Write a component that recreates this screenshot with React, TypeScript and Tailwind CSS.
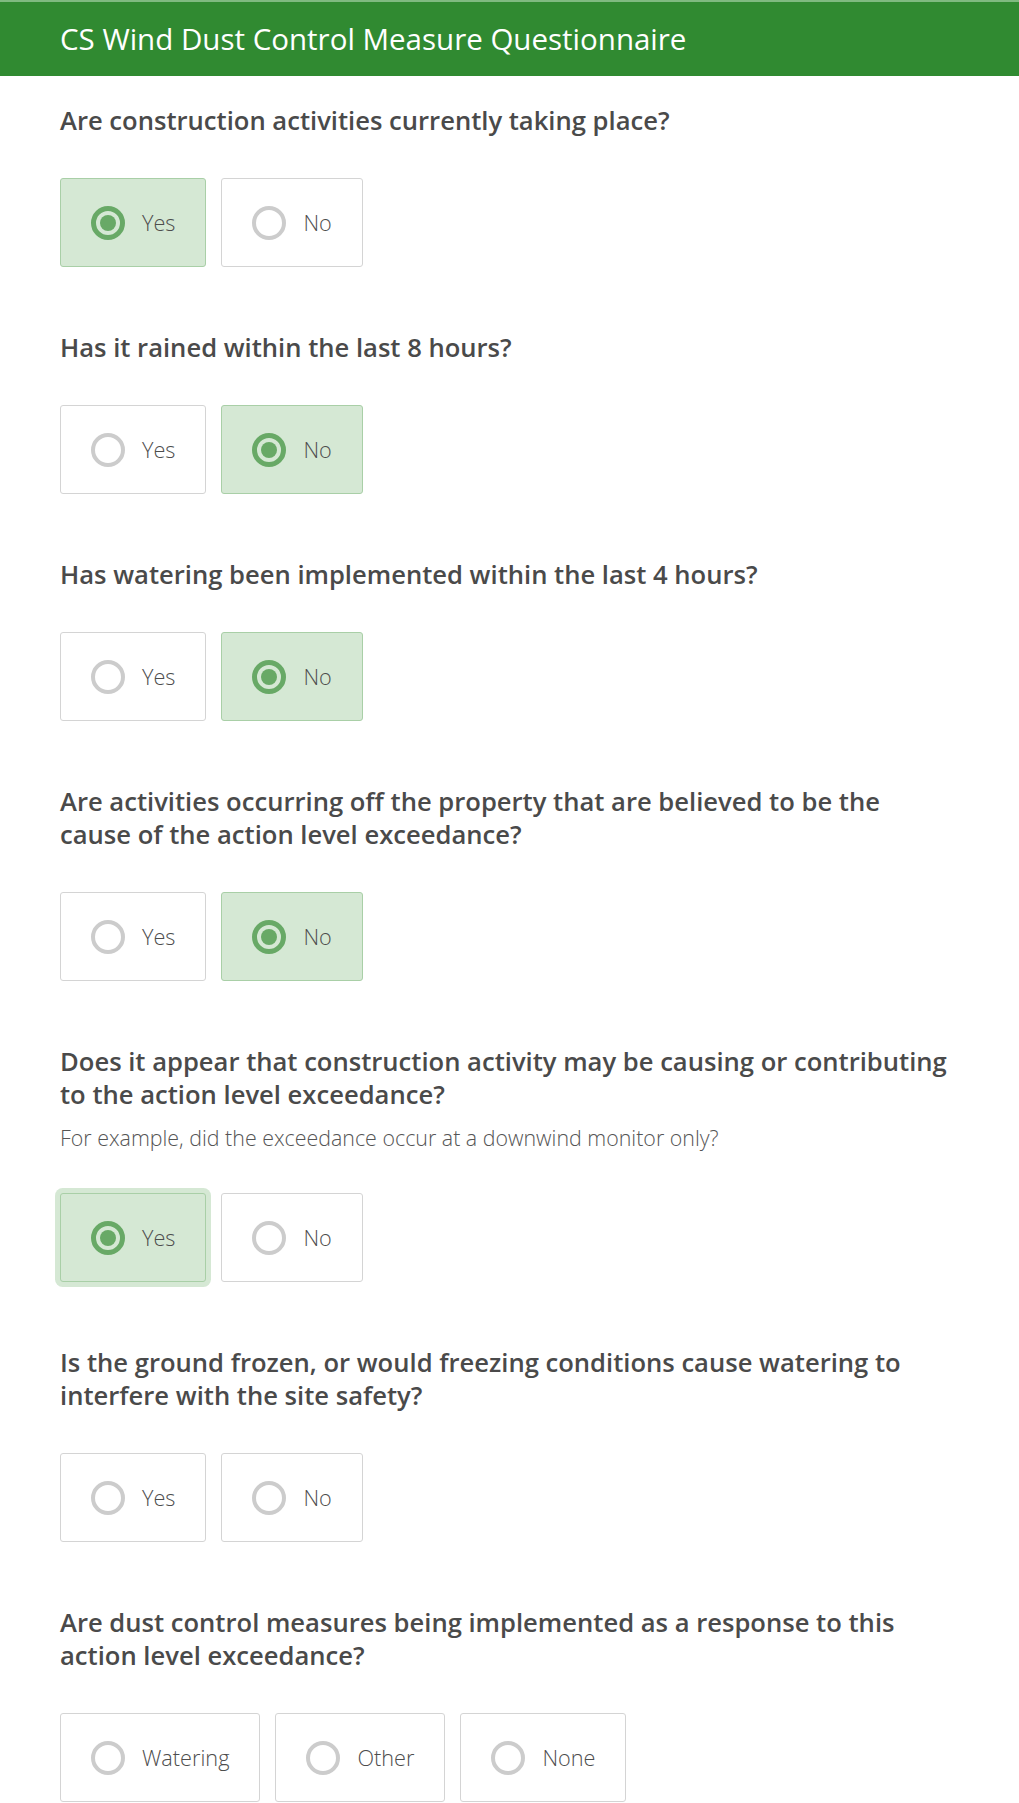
import { Fragment } from "react";

type Question = {
  lines: string[];
  hint?: string;
  options: string[];
  selected?: string;
  focused?: boolean;
};

const questions: Question[] = [
  {
    lines: ["Are construction activities currently taking place?"],
    options: ["Yes", "No"],
    selected: "Yes",
  },
  {
    lines: ["Has it rained within the last 8 hours?"],
    options: ["Yes", "No"],
    selected: "No",
  },
  {
    lines: ["Has watering been implemented within the last 4 hours?"],
    options: ["Yes", "No"],
    selected: "No",
  },
  {
    lines: [
      "Are activities occurring off the property that are believed to be the",
      "cause of the action level exceedance?",
    ],
    options: ["Yes", "No"],
    selected: "No",
  },
  {
    lines: [
      "Does it appear that construction activity may be causing or contributing",
      "to the action level exceedance?",
    ],
    hint: "For example, did the exceedance occur at a downwind monitor only?",
    options: ["Yes", "No"],
    selected: "Yes",
    focused: true,
  },
  {
    lines: [
      "Is the ground frozen, or would freezing conditions cause watering to",
      "interfere with the site safety?",
    ],
    options: ["Yes", "No"],
  },
  {
    lines: [
      "Are dust control measures being implemented as a response to this",
      "action level exceedance?",
    ],
    options: ["Watering", "Other", "None"],
  },
];

function Radio({ checked }: { checked: boolean }) {
  if (checked) {
    return (
      <span className="flex h-[34px] w-[34px] shrink-0 items-center justify-center rounded-full border-[5px] border-[#68a966]">
        <span className="h-[16px] w-[16px] rounded-full bg-[#68a966]" />
      </span>
    );
  }
  return (
    <span className="h-[34px] w-[34px] shrink-0 rounded-full border-[4px] border-[#cccccc]" />
  );
}

function Option({
  label,
  checked,
  focused,
}: {
  label: string;
  checked: boolean;
  focused: boolean;
}) {
  return (
    <div
      className={
        "flex h-[89px] items-center gap-[17px] rounded-[3px] border px-[30px] " +
        (checked
          ? "border-[#a9cfa7] bg-[#d5e8d4]"
          : "border-[#d4d4d4] bg-white") +
        (focused ? " ring-[5px] ring-[#d5e8d4]" : "")
      }
    >
      <Radio checked={checked} />
      <span className="text-[21.7px] font-light leading-none text-[#4d4d4d]">
        {label}
      </span>
    </div>
  );
}

export default function App() {
  return (
    <div
      className="min-h-screen bg-white"
      style={{ fontFamily: "'Open Sans', Lato, sans-serif" }}
    >
      <header className="border-t-2 border-[#7fba80] bg-[#308a31]">
        <h1 className="flex h-[74px] items-center px-[60px] text-[29.5px] font-normal text-white">
          CS Wind Dust Control Measure Questionnaire
        </h1>
      </header>
      <main className="flex flex-col gap-[64px] px-[60px] pt-[28px]">
        {questions.map((q, i) => (
          <section key={i}>
            <h2 className="text-[25.6px] font-semibold leading-[33px] text-[#4a4a4a]">
              {q.lines.map((l, j) => (
                <Fragment key={j}>
                  {j > 0 && <br />}
                  {l}
                </Fragment>
              ))}
            </h2>
            {q.hint && (
              <p className="mt-[14px] text-[21.4px] font-light leading-[26px] text-[#555555]">
                {q.hint}
              </p>
            )}
            <div className={"flex gap-[15px] " + (q.hint ? "mt-[42px]" : "mt-[41px]")}>
              {q.options.map((o) => (
                <Option
                  key={o}
                  label={o}
                  checked={q.selected === o}
                  focused={!!q.focused && q.selected === o}
                />
              ))}
            </div>
          </section>
        ))}
      </main>
    </div>
  );
}
